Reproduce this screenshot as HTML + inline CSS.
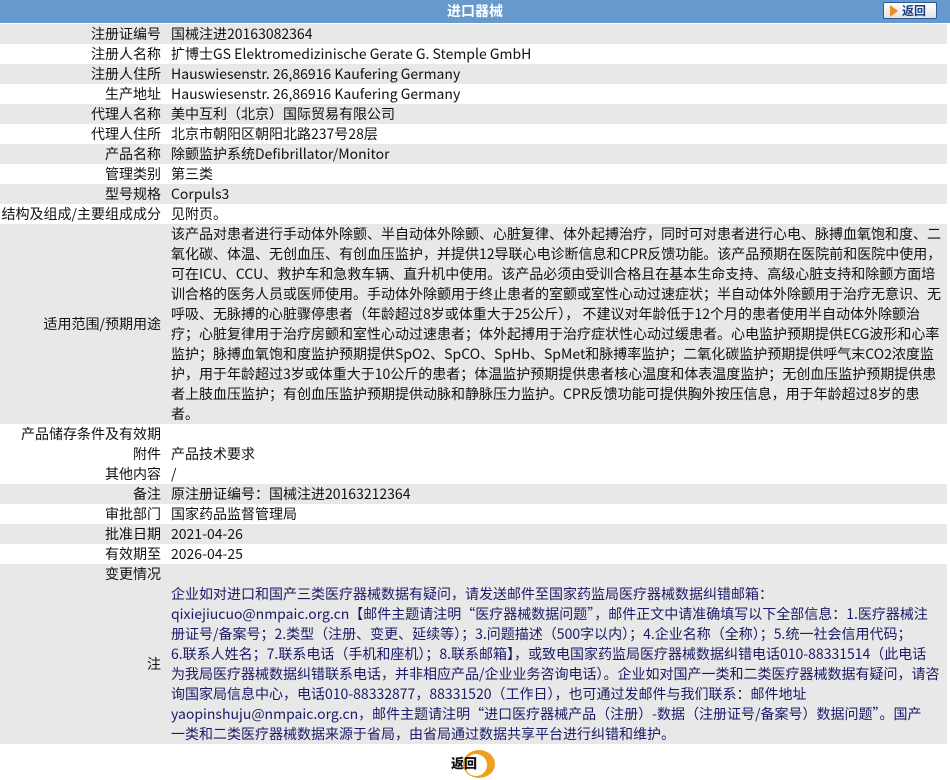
<!DOCTYPE html>
<html><head><meta charset="utf-8"><style>
body{margin:0;width:950px;height:780px;background:#fff;font-family:"Noto Sans CJK SC","Liberation Sans",sans-serif;font-size:14px;color:#111;overflow:hidden}
.hd{height:23px;background:#6699cc;position:relative;color:#fff;font-weight:bold;text-align:center;line-height:23px;font-size:14px}
.btn{position:absolute;left:883px;top:2px;width:54px;height:17px;border:1px solid #2a5a9a;border-radius:2px;background:linear-gradient(#fff,#e4e4e4);color:#1a3f80;font-size:12px;line-height:15px;text-align:left;box-sizing:border-box}
.btn i{display:inline-block;width:0;height:0;border-left:8px solid #f08a1c;border-top:6px solid transparent;border-bottom:6px solid transparent;margin:0 4px 0 6px;vertical-align:-2px}
table{border-collapse:collapse;width:947px;margin-top:1px;table-layout:fixed}
td{padding:0;line-height:20px;vertical-align:middle}
td.l{width:161px;text-align:right;padding-right:10px;white-space:nowrap}
td.v{white-space:nowrap;overflow:hidden}
tr.g td{background:#e8e8e8}
.n{color:#1a1a66}
.ret{position:absolute;left:451px;top:750px;font-weight:bold;font-size:13px}
.ret span{position:absolute;left:12px;top:0;width:32px;height:28px;border-radius:50%;background:#f0a020}
.ret span:after{content:"";position:absolute;left:2px;top:4px;width:22px;height:22px;border-radius:50%;background:#fff}
.ret b{position:relative;z-index:2;line-height:26px}
</style></head><body>
<div class="hd">进口器械<div class="btn"><i></i>返回</div></div>
<table>
<col style="width:171px"><col>
<tr class="g"><td class="l">注册证编号</td><td class="v">国械注进20163082364</td></tr>
<tr><td class="l">注册人名称</td><td class="v">扩博士GS Elektromedizinische Gerate G. Stemple GmbH</td></tr>
<tr class="g"><td class="l">注册人住所</td><td class="v">Hauswiesenstr. 26,86916 Kaufering Germany</td></tr>
<tr><td class="l">生产地址</td><td class="v">Hauswiesenstr. 26,86916 Kaufering Germany</td></tr>
<tr class="g"><td class="l">代理人名称</td><td class="v">美中互利（北京）国际贸易有限公司</td></tr>
<tr><td class="l">代理人住所</td><td class="v">北京市朝阳区朝阳北路237号28层</td></tr>
<tr class="g"><td class="l">产品名称</td><td class="v">除颤监护系统Defibrillator/Monitor</td></tr>
<tr><td class="l">管理类别</td><td class="v">第三类</td></tr>
<tr class="g"><td class="l">型号规格</td><td class="v">Corpuls3</td></tr>
<tr><td class="l">结构及组成/主要组成成分</td><td class="v">见附页。</td></tr>
<tr class="g"><td class="l">适用范围/预期用途</td><td class="v">该产品对患者进行手动体外除颤、半自动体外除颤、心脏复律、体外起搏治疗，同时可对患者进行心电、脉搏血氧饱和度、二<br>氧化碳、体温、无创血压、有创血压监护，并提供12导联心电诊断信息和CPR反馈功能。该产品预期在医院前和医院中使用，<br>可在ICU、CCU、救护车和急救车辆、直升机中使用。该产品必须由受训合格且在基本生命支持、高级心脏支持和除颤方面培<br>训合格的医务人员或医师使用。手动体外除颤用于终止患者的室颤或室性心动过速症状；半自动体外除颤用于治疗无意识、无<br>呼吸、无脉搏的心脏骤停患者（年龄超过8岁或体重大于25公斤）， 不建议对年龄低于12个月的患者使用半自动体外除颤治<br>疗；心脏复律用于治疗房颤和室性心动过速患者；体外起搏用于治疗症状性心动过缓患者。心电监护预期提供ECG波形和心率<br>监护；脉搏血氧饱和度监护预期提供SpO2、SpCO、SpHb、SpMet和脉搏率监护；二氧化碳监护预期提供呼气末CO2浓度监<br>护，用于年龄超过3岁或体重大于10公斤的患者；体温监护预期提供患者核心温度和体表温度监护；无创血压监护预期提供患<br>者上肢血压监护；有创血压监护预期提供动脉和静脉压力监护。CPR反馈功能可提供胸外按压信息，用于年龄超过8岁的患<br>者。</td></tr>
<tr><td class="l">产品储存条件及有效期</td><td class="v"></td></tr>
<tr><td class="l">附件</td><td class="v">产品技术要求</td></tr>
<tr><td class="l">其他内容</td><td class="v">/</td></tr>
<tr class="g"><td class="l">备注</td><td class="v">原注册证编号：国械注进20163212364</td></tr>
<tr><td class="l">审批部门</td><td class="v">国家药品监督管理局</td></tr>
<tr class="g"><td class="l">批准日期</td><td class="v">2021-04-26</td></tr>
<tr><td class="l">有效期至</td><td class="v">2026-04-25</td></tr>
<tr class="g"><td class="l">变更情况</td><td class="v"></td></tr>
<tr class="g"><td class="l">注</td><td class="v n">企业如对进口和国产三类医疗器械数据有疑问，请发送邮件至国家药监局医疗器械数据纠错邮箱：<br>qixiejiucuo@nmpaic.org.cn【邮件主题请注明“医疗器械数据问题”，邮件正文中请准确填写以下全部信息：1.医疗器械注<br>册证号/备案号；2.类型（注册、变更、延续等）；3.问题描述（500字以内）；4.企业名称（全称）；5.统一社会信用代码；<br>6.联系人姓名；7.联系电话（手机和座机）；8.联系邮箱】，或致电国家药监局医疗器械数据纠错电话010-88331514（此电话<br>为我局医疗器械数据纠错联系电话，并非相应产品/企业业务咨询电话）。企业如对国产一类和二类医疗器械数据有疑问，请咨<br>询国家局信息中心，电话010-88332877，88331520（工作日），也可通过发邮件与我们联系：邮件地址<br>yaopinshuju@nmpaic.org.cn，邮件主题请注明“进口医疗器械产品（注册）-数据（注册证号/备案号）数据问题”。国产<br>一类和二类医疗器械数据来源于省局，由省局通过数据共享平台进行纠错和维护。</td></tr>
</table>
<div class="ret"><span></span><b>返回</b></div>
</body></html>
